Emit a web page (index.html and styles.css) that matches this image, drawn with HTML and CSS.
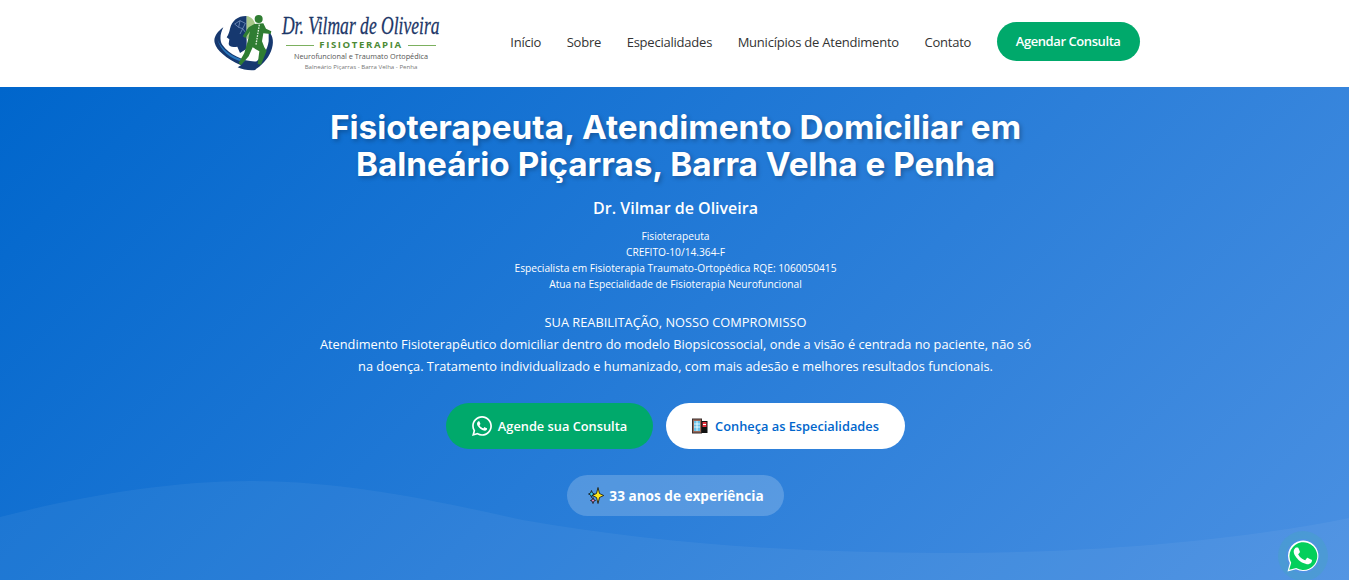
FILE: index.html
```html
<!DOCTYPE html>
<html lang="pt-BR">
<head>
  <meta charset="UTF-8">
  <meta name="viewport" content="width=device-width, initial-scale=1.0">
  <title>Dr. Vilmar de Oliveira - Fisioterapia</title>
  <link rel="stylesheet" href="styles.css">
</head>
<body>
  <header class="site-header">
    <div class="header-inner">
      <a class="logo" href="#">
        <svg class="logo-mark" width="64" height="58" viewBox="14 15 192 174" aria-hidden="true">
          <path d="M110 24 C85 24 68 38 62 62 C60 72 58 78 52 88 L60 94 L58 108 C60 118 72 118 84 116 L92 135 L112 122 L112 24 Z" fill="#16386f"/>
          <path d="M112 24 C125 26 135 36 138 50 L128 60 L122 85 L112 95 Z" fill="#a9c98a"/>
          <path d="M76 48 L92 38 L108 46 L100 62 L112 78 M92 38 L88 58 L100 62 M88 58 L76 48 M100 62 L92 78" fill="none" stroke="#8aa5cf" stroke-width="2"/>
          <path d="M42 58 C22 72 12 90 16 104 C22 128 50 150 95 172 L85 178 C100 185 120 188 138 186 L145 160 C110 165 60 140 40 112 C30 98 32 78 42 58 Z" fill="#16386f"/>
          <path d="M24 92 C34 122 66 146 108 158 L100 162 C64 152 32 128 24 92 Z" fill="#2a78bd"/>
          <path d="M178 70 C192 85 195 105 185 130 C175 155 155 175 135 186 L142 160 C160 145 175 125 178 100 Z" fill="#16386f"/>
          <circle cx="148" cy="33" r="12" fill="#2f7d32"/>
          <path d="M135 48 L162 46 L170 62 L186 70 L184 78 L162 76 L158 100 L165 118 L172 128 L155 170 L145 168 L150 130 L130 118 L118 145 L95 172 L88 165 L105 135 L115 100 L122 70 L108 90 L100 85 L118 58 Z" fill="#2f7d32"/>
          <path d="M150 50 L140 110" stroke="#dfeeda" stroke-width="4" stroke-dasharray="5 3" fill="none"/>
        </svg>
        <span class="logo-text">
          <span class="logo-name">Dr. Vilmar de Oliveira</span>
          <span class="logo-area">FISIOTERAPIA</span>
          <span class="logo-sub">Neurofuncional e Traumato Ortopédica</span>
          <span class="logo-city">Balneário Piçarras - Barra Velha - Penha</span>
        </span>
      </a>
      <nav class="main-nav">
        <a href="#">Início</a>
        <a href="#">Sobre</a>
        <a href="#">Especialidades</a>
        <a href="#">Municípios de Atendimento</a>
        <a href="#">Contato</a>
        <a class="nav-btn" href="#">Agendar Consulta</a>
      </nav>
    </div>
  </header>

  <section class="hero">
    <svg class="hero-wave" viewBox="0 0 1349 120" preserveAspectRatio="none" aria-hidden="true">
      <path d="M0 57 C80 36 170 21 250 21 C350 21 440 42 523 60 C660 84 800 93 947 93 C1100 93 1240 80 1349 58 L1349 120 L0 120 Z" fill="#ffffff" fill-opacity="0.05"/>
    </svg>
    <div class="hero-content">
      <h1>Fisioterapeuta, Atendimento Domiciliar em Balneário Piçarras, Barra Velha e Penha</h1>
      <h2>Dr. Vilmar de Oliveira</h2>
      <p class="credentials">
        Fisioterapeuta<br>
        CREFITO-10/14.364-F<br>
        Especialista em Fisioterapia Traumato-Ortopédica RQE: 1060050415<br>
        Atua na Especialidade de Fisioterapia Neurofuncional
      </p>
      <p class="lead">
        SUA REABILITAÇÃO, NOSSO COMPROMISSO<br>
        Atendimento Fisioterapêutico domiciliar dentro do modelo Biopsicossocial, onde a visão é centrada no paciente, não só na doença. Tratamento individualizado e humanizado, com mais adesão e melhores resultados funcionais.
      </p>
      <div class="hero-actions">
        <a class="btn btn-green" href="#">
          <svg width="20" height="20" viewBox="2 2 20 20" aria-hidden="true"><path fill="#fff" d="M12.04 2C6.58 2 2.13 6.45 2.13 11.91c0 1.75.46 3.45 1.32 4.95L2.05 22l5.25-1.38a9.9 9.9 0 0 0 4.74 1.21c5.46 0 9.91-4.45 9.91-9.91S17.5 2 12.04 2zm0 18.15c-1.48 0-2.93-.4-4.2-1.15l-.3-.18-3.12.82.83-3.04-.2-.31a8.2 8.2 0 0 1-1.26-4.38c0-4.54 3.7-8.24 8.24-8.24s8.24 3.7 8.24 8.24-3.69 8.24-8.23 8.24zm4.52-6.16c-.25-.12-1.47-.72-1.69-.81-.23-.08-.39-.12-.56.13-.17.25-.64.81-.78.97-.14.17-.29.19-.54.06-.25-.12-1.05-.39-1.99-1.23-.74-.66-1.23-1.47-1.38-1.72-.14-.25-.02-.38.11-.51.11-.11.25-.29.37-.43.12-.14.17-.25.25-.41.08-.17.04-.31-.02-.43-.06-.12-.56-1.34-.76-1.84-.2-.48-.41-.42-.56-.43h-.48c-.17 0-.43.06-.66.31-.22.25-.86.85-.86 2.07s.89 2.4 1.01 2.56c.12.17 1.75 2.67 4.23 3.74.59.26 1.05.41 1.41.52.59.19 1.13.16 1.56.1.48-.07 1.47-.6 1.67-1.18.21-.58.21-1.07.14-1.18-.06-.11-.22-.17-.47-.29z"/></svg>
          Agende sua Consulta
        </a>
        <a class="btn btn-white" href="#">
          <svg width="16" height="16" viewBox="0 0 16 16" aria-hidden="true">
            <rect x="0.5" y="1" width="9" height="14" fill="#9a6a5a" stroke="#3a2f2d" stroke-width="1"/>
            <rect x="2" y="3" width="6" height="10" fill="#67c3ea"/>
            <path d="M2 6 H8 M2 9 H8 M5 3 V13" stroke="#fff" stroke-width="0.8"/>
            <rect x="9.5" y="3" width="6" height="12" fill="#111"/>
            <rect x="10.5" y="4" width="4" height="5" fill="#e8333f"/>
            <rect x="11" y="6" width="3" height="1" fill="#fff"/>
          </svg>
          Conheça as Especialidades
        </a>
      </div>
      <div class="badge">
        <svg width="16" height="17" viewBox="0 0 16 17" aria-hidden="true">
          <path d="M3.5 3.5 L4.4 6 L6.5 7 L4.4 8 L3.5 10.5 L2.6 8 L0.5 7 L2.6 6 Z" fill="#3fd0e8" stroke="#111" stroke-width="0.8"/>
          <path d="M5 10.5 L5.8 12.8 L7.5 13.5 L5.8 14.2 L5 16.5 L4.2 14.2 L2.5 13.5 L4.2 12.8 Z" fill="#ef8fc4" stroke="#111" stroke-width="0.8"/>
          <path d="M10 0.5 L11.5 6.5 L15.7 8.5 L11.5 10.5 L10 16.5 L8.5 10.5 L4.3 8.5 L8.5 6.5 Z" fill="#ffe81a" stroke="#111" stroke-width="0.8"/>
        </svg>
        33 anos de experiência
      </div>
    </div>
  </section>

  <a class="wa-float" href="#" aria-label="WhatsApp">
    <svg width="34" height="34" viewBox="0 0 34 34" aria-hidden="true">
      <path d="M1.5 32.5 L3.8 24 A15.2 15.2 0 1 1 10 30.2 Z" fill="#fff"/>
      <path d="M3.2 30.8 L5.2 23.8 A13.9 13.9 0 1 1 10.2 29 Z" fill="#04cf5c"/>
      <path fill="#fff" d="M12.5 9.2c-.4-.8-.7-.8-1.1-.8h-.9c-.3 0-.8.1-1.2.6-.4.5-1.6 1.5-1.6 3.7s1.6 4.3 1.8 4.6c.2.3 3.1 5 7.7 6.8 3.8 1.5 4.6 1.2 5.4 1.1.8-.1 2.7-1.1 3-2.1.4-1.1.4-2 .3-2.1-.1-.2-.4-.3-.9-.6-.5-.2-2.7-1.3-3.1-1.5-.4-.2-.7-.2-1 .2-.3.5-1.2 1.5-1.4 1.8-.3.3-.5.3-1 .1-.5-.2-1.9-.7-3.6-2.2-1.3-1.2-2.2-2.6-2.5-3.1-.3-.5 0-.7.2-.9.2-.2.5-.5.7-.8.2-.3.3-.5.5-.8.2-.3.1-.6 0-.8-.2-.3-1-2.5-1.4-3.3z"/>
    </svg>
  </a>
</body>
</html>
```

FILE: styles.css
```css
* {
  box-sizing: border-box;
}

html, body {
  margin: 0;
  padding: 0;
  height: 580px;
  overflow: hidden;
}

body {
  font-family: "Open Sans", sans-serif;
  color: #fff;
  background-color: #3a85dd;
}

a {
  text-decoration: none;
}

.site-header {
  height: 87px;
  background-color: #fff;
}

.header-inner {
  max-width: 940px;
  height: 100%;
  margin: 0 auto;
  padding: 0 5px 4px 9px;
  display: flex;
  align-items: center;
  justify-content: space-between;
}

.logo {
  display: flex;
  align-items: center;
  gap: 5px;
}

.logo-text {
  display: flex;
  flex-direction: column;
  align-items: center;
  width: 157px;
  padding-top: 2px;
}

.logo-name {
  font-family: "Liberation Serif", serif;
  font-style: italic;
  font-size: 26px;
  line-height: 26px;
  color: #1d3768;
  white-space: nowrap;
  -webkit-text-stroke: 0.3px #1d3768;
  transform: scaleX(0.675);
}

.logo-area {
  font-weight: 700;
  font-size: 9.6px;
  line-height: 12px;
  letter-spacing: 1.6px;
  color: #4c8a35;
  display: flex;
  align-items: center;
  gap: 5px;
  width: 150px;
  justify-content: center;
}

.logo-area::before,
.logo-area::after {
  content: "";
  flex: 1;
  height: 1px;
  background-color: #7cb05f;
}

.logo-sub {
  font-size: 7.3px;
  line-height: 11px;
  color: #555;
  white-space: nowrap;
}

.logo-city {
  font-size: 6.1px;
  line-height: 10px;
  color: #777;
  white-space: nowrap;
}

.main-nav {
  display: flex;
  align-items: center;
  gap: 25.5px;
}

.main-nav a {
  font-size: 13px;
  letter-spacing: -0.22px;
  color: #333;
}

.main-nav .nav-btn {
  background-color: #00a96b;
  color: #fff;
  font-weight: 600;
  letter-spacing: -0.42px;
  padding: 10px 19px;
  border-radius: 20px;
  line-height: 19px;
}

.hero {
  position: relative;
  height: 493px;
  background: linear-gradient(135deg, #0066cc 0%, #4a90e2 100%);
  overflow: hidden;
}

.hero-wave {
  position: absolute;
  left: 0;
  bottom: 0;
  width: 100%;
  height: 120px;
}

.hero-content {
  position: relative;
  max-width: 732px;
  margin: 0 auto;
  padding: 22px 0 0 2px;
  text-align: center;
}

h1 {
  margin: 0 0 13px;
  font-family: "Inter", sans-serif;
  font-weight: 700;
  font-size: 33.3px;
  line-height: 37px;
  text-shadow: 2px 2px 4px rgba(0, 0, 0, 0.25);
}

h2 {
  margin: 0 0 8px;
  font-size: 16px;
  font-weight: 600;
  line-height: 24px;
}

.credentials {
  margin: 0 0 19px;
  font-size: 10.2px;
  line-height: 16px;
  font-weight: 500;
}

.lead {
  margin: 0 auto 26px;
  max-width: 720px;
  font-size: 12.8px;
  line-height: 22px;
}

.hero-actions {
  display: flex;
  justify-content: center;
  gap: 13px;
  margin-bottom: 26px;
}

.btn {
  display: inline-flex;
  align-items: center;
  justify-content: center;
  gap: 6px;
  height: 46px;
  border-radius: 23px;
  font-size: 12.8px;
  font-weight: 600;
}

.btn-green {
  width: 207px;
  background-color: #00a96b;
  color: #fff;
}

.btn-white {
  width: 239px;
  gap: 7px;
  background-color: #fff;
  color: #0066cc;
}

.badge {
  display: inline-flex;
  align-items: center;
  gap: 5px;
  height: 41px;
  padding: 0 20px 0 21px;
  border-radius: 21px;
  background-color: rgba(255, 255, 255, 0.2);
  font-size: 13.6px;
  font-weight: 700;
}

.wa-float {
  position: absolute;
  left: 1286px;
  top: 539px;
  width: 34px;
  height: 34px;
  border-radius: 50%;
  box-shadow: 0 0 0 8px rgba(37, 211, 102, 0.1);
}
```
